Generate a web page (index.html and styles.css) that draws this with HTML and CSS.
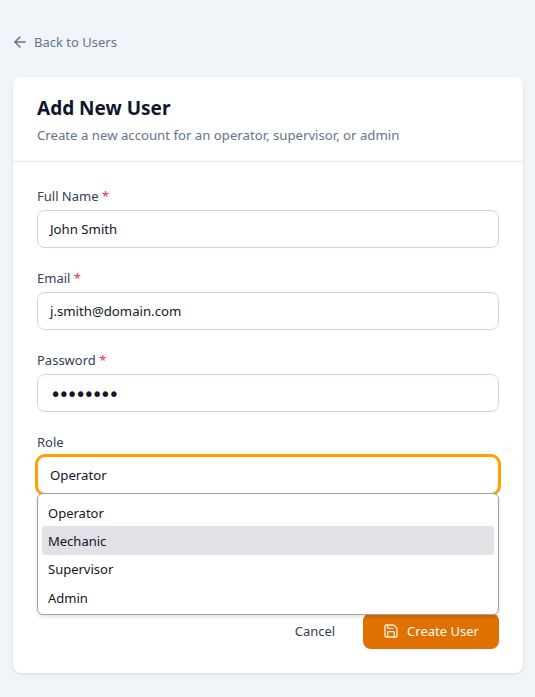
FILE: index.html
```html
<!DOCTYPE html>
<html lang="en">
<head>
<meta charset="utf-8">
<title>Add New User</title>
<link rel="stylesheet" href="styles.css">
</head>
<body>
<main class="page">
  <a class="back" href="#">
    <svg class="back-icon" viewBox="0 0 14 14" fill="none" stroke="currentColor" stroke-width="1.6" stroke-linecap="round" stroke-linejoin="round"><path d="M12 7H2"/><path d="M7 12L2 7l5-5"/></svg>
    <span>Back to Users</span>
  </a>
  <section class="card">
    <header class="card-head">
      <h1>Add New User</h1>
      <p>Create a new account for an operator, supervisor, or admin</p>
    </header>
    <form class="form">
      <div class="field">
        <label>Full Name <span class="req">*</span></label>
        <div class="input">John Smith</div>
      </div>
      <div class="field">
        <label>Email <span class="req">*</span></label>
        <div class="input">j.smith@domain.com</div>
      </div>
      <div class="field">
        <label>Password <span class="req">*</span></label>
        <div class="input dots">••••••••</div>
      </div>
      <div class="field role">
        <label>Role</label>
        <div class="input focus">Operator</div>
        <ul class="menu">
          <li>Operator</li>
          <li class="active">Mechanic</li>
          <li>Supervisor</li>
          <li>Admin</li>
        </ul>
      </div>
      <div class="actions">
        <button type="button" class="cancel">Cancel</button>
        <button type="button" class="submit">
          <svg class="save-icon" viewBox="0 0 24 24" fill="none" stroke="currentColor" stroke-width="2" stroke-linecap="round" stroke-linejoin="round"><path d="M15.2 3a2 2 0 0 1 1.4.6l3.8 3.8a2 2 0 0 1 .6 1.4V19a2 2 0 0 1-2 2H5a2 2 0 0 1-2-2V5a2 2 0 0 1 2-2z"/><path d="M17 21v-7a1 1 0 0 0-1-1H8a1 1 0 0 0-1 1v7"/><path d="M7 3v4a1 1 0 0 0 1 1h7"/></svg>
          <span>Create User</span>
        </button>
      </div>
    </form>
  </section>
</main>
</body>
</html>
```

FILE: styles.css
```css
* { box-sizing: border-box; }
html, body { margin: 0; height: 100%; }
body {
  background: #f1f5f9;
  color: #0f172a;
  font-family: "Noto Sans", "Open Sans", sans-serif;
  font-size: 14px;
  overflow: hidden;
}
.page { padding: 32px 12px 24px 13px; }
.back {
  display: flex;
  align-items: center;
  gap: 7px;
  height: 20px;
  color: #64748b;
  font-size: 13px;
  text-decoration: none;
}
.back-icon { width: 14px; height: 14px; }
.card {
  margin-top: 25px;
  height: 596px;
  background: #fff;
  border-radius: 8px;
  box-shadow: 0 1px 3px rgba(15, 23, 42, .13);
}
.card-head {
  height: 85px;
  padding: 18px 24px 0;
  border-bottom: 1px solid #e2e8f0;
}
h1 { margin: 0; font-size: 19px; line-height: 26px; font-weight: 700; color: #0f172a; }
.card-head p { margin: 4px 0 0; font-size: 13.2px; line-height: 20px; color: #64748b; }
.form { padding: 24px 24px 0; }
.field { margin-bottom: 20px; position: relative; }
.field label { display: block; height: 20px; margin-bottom: 4px; font-size: 13px; line-height: 20px; color: #334155; }
.req { color: #ef2b4d; }
.input {
  height: 38px;
  padding: 0 12px;
  border: 1px solid #cbd5e1;
  border-radius: 8px;
  background: #fff;
  font-size: 13.2px;
  line-height: 36px;
  color: #0f172a;
}
.dots { font-family: "DejaVu Sans", sans-serif; font-size: 19px; line-height: 38px; letter-spacing: -2.9px; }
.focus { border-color: #ff9f00; box-shadow: 0 0 0 2px #ff9f00; }
.menu {
  position: absolute;
  z-index: 2;
  left: 0;
  right: 0;
  top: 61px;
  margin: 0;
  padding: 4px;
  height: 122px;
  list-style: none;
  background: #fff;
  border: 1px solid #a3a3a3;
  border-radius: 6px;
  box-shadow: 0 2px 4px rgba(0, 0, 0, .12);
}
.menu li { height: 28.5px; padding: 0 6px; font-size: 13px; line-height: 29px; color: #0f172a; border-radius: 3px; }
.menu li:first-child { height: 28px; line-height: 31px; }
.menu li.active { height: 29px; line-height: 30px; background: #e1e1e6; }
.actions { display: flex; justify-content: flex-end; align-items: center; gap: 12px; margin-top: 119px; }
button { font: inherit; border: 0; cursor: pointer; }
.cancel { width: 72px; height: 36px; background: transparent; color: #334155; font-size: 13px; padding: 0; }
.submit {
  display: flex;
  align-items: center;
  justify-content: center;
  gap: 8px;
  width: 136px;
  height: 36px;
  border-radius: 8px;
  background: #e07000;
  color: #fff;
  font-size: 13px;
}
.save-icon { width: 16px; height: 16px; opacity: .85; }
```
